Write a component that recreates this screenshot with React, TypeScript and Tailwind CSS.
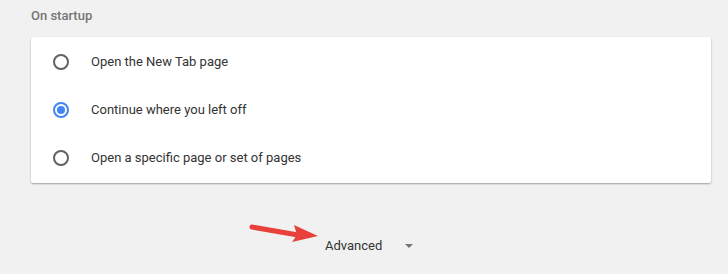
import React from 'react';

const options = [
  { label: 'Open the New Tab page', checked: false },
  { label: 'Continue where you left off', checked: true },
  { label: 'Open a specific page or set of pages', checked: false },
];

const Radio: React.FC<{ checked: boolean }> = ({ checked }) => (
  <div
    className={`w-4 h-4 rounded-full border-2 flex items-center justify-center ${
      checked ? 'border-[#4285f4]' : 'border-[#5f6368]'
    }`}
  >
    {checked && <div className="w-2 h-2 rounded-full bg-[#4285f4]" />}
  </div>
);

export default function App() {
  return (
    <div
      className="w-[728px] h-[274px] bg-[#f1f1f1] overflow-hidden"
      style={{ fontFamily: 'Roboto, "Liberation Sans", sans-serif' }}
    >
      <div className="pl-[31px] pr-[17px]">
        <div className="h-[37px] pt-[6px] text-[13px] font-medium text-[#757575]">On startup</div>

        <div className="bg-white rounded-[2px] shadow-[0_1px_2px_rgba(0,0,0,0.35)] pt-[1px] pb-[1px]">
          {options.map((o) => (
            <div key={o.label} className="h-[48px] flex items-center pl-[22px]">
              <Radio checked={o.checked} />
              <span className="ml-[22px] text-[13px] text-[#333]">{o.label}</span>
            </div>
          ))}
        </div>
      </div>

      <div className="mt-[53px] flex items-center relative">
        <svg className="absolute left-[248px] top-[-12px]" width="72" height="24" viewBox="0 0 72 24">
          <path d="M4 3 L50 11" stroke="#e8403b" strokeWidth="5" strokeLinecap="round" />
          <path d="M46 1 L70 12 L44 18 L49 11 Z" fill="#e8403b" />
        </svg>
        <span className="ml-[325px] text-[13px] text-[#333]">Advanced</span>
        <svg className="ml-[23px]" width="8" height="4" viewBox="0 0 8 4">
          <path d="M0 0 L8 0 L4 4 Z" fill="#757575" />
        </svg>
      </div>
    </div>
  );
}
